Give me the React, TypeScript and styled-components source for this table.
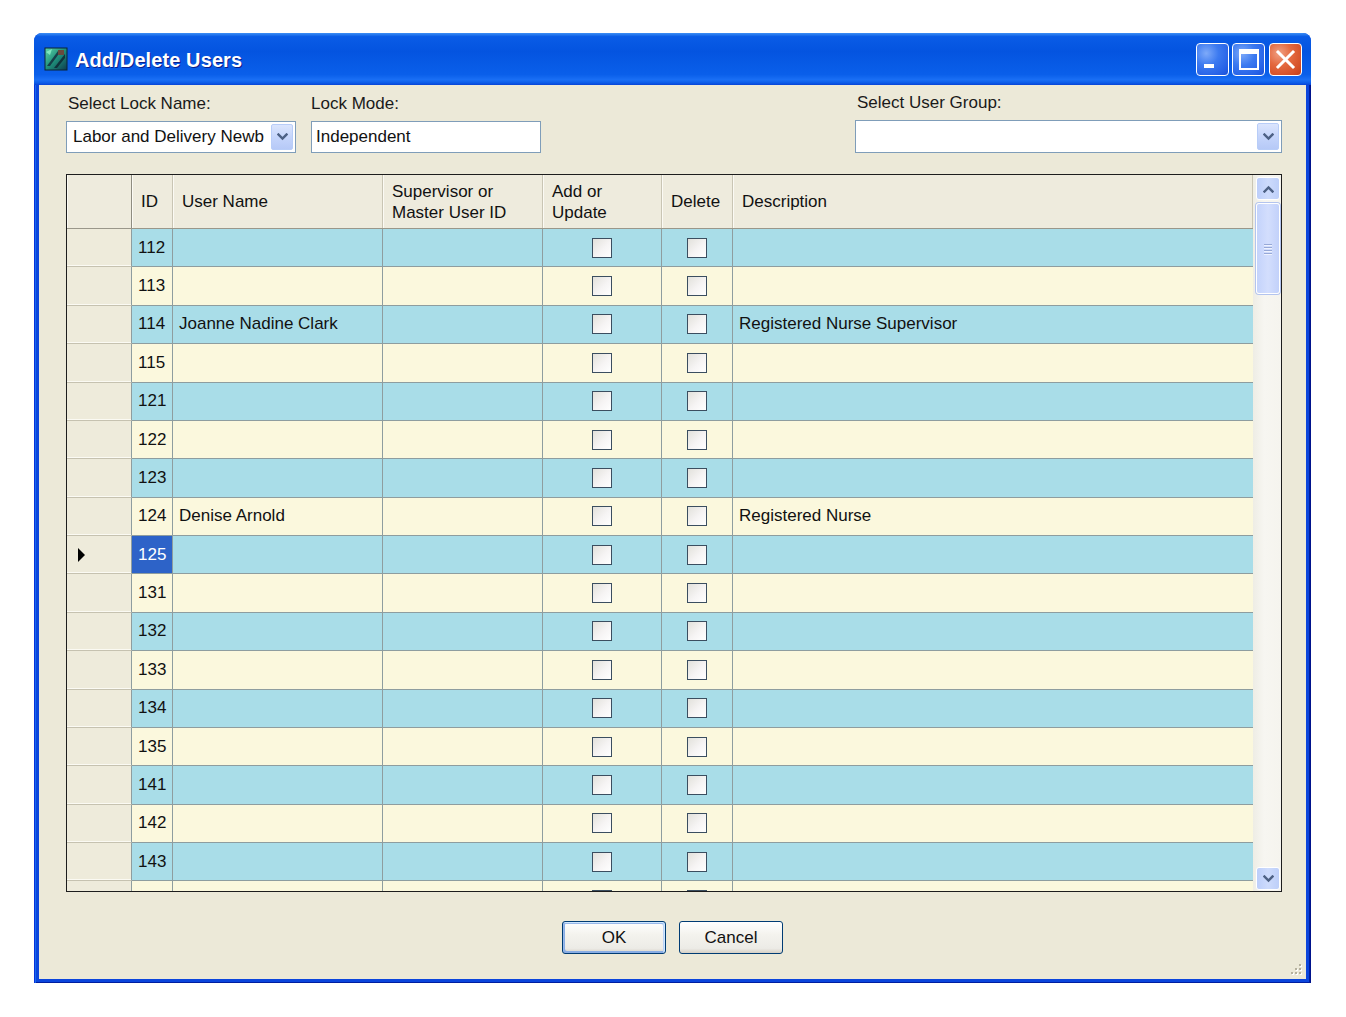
import React from 'react';
import styled, { createGlobalStyle, css } from 'styled-components';

const GlobalStyle = createGlobalStyle`
  html, body { margin: 0; padding: 0; background: #ffffff; }
  body { font-family: "Liberation Sans", Arial, sans-serif; color: #000; }
  * { box-sizing: border-box; }
`;

const COLS = '65px 41px 210px 160px 119px 71px 1fr';
const LINE = '#8e9d9f';

const Page = styled.div`
  padding: 33px 0 0 34px;
`;

const Window = styled.div`
  width: 1277px;
  height: 950px;
  display: flex;
  flex-direction: column;
  border-radius: 8px 8px 0 0;
  overflow: hidden;
  background: #0b45dc;
`;

const TitleBar = styled.div`
  height: 52px;
  flex: none;
  display: flex;
  align-items: center;
  padding: 0 9px 0 10px;
  background: linear-gradient(180deg, #3d8ff5 0%, #0a5ce6 7%, #0454e0 35%, #0a5fea 80%, #1a6ff5 90%, #0c5ce8 96%, #0844d6 100%);
`;

const TitleIcon = styled.svg`
  width: 24px;
  height: 24px;
  flex: none;
  margin-right: 7px;
`;

const TitleText = styled.div`
  flex: 1;
  font-family: "Liberation Sans", Arial, sans-serif;
  font-weight: bold;
  font-size: 20px;
  color: #ffffff;
  text-shadow: 1px 1px 0 #0a1e8a;
  letter-spacing: 0.1px;
  padding-top: 2px;
`;

const CaptionButtons = styled.div`
  display: flex;
  gap: 3px;
  align-items: center;
  margin-top: 1px;
`;

const CaptionButton = styled.div<{ $close?: boolean }>`
  width: 33px;
  height: 33px;
  border: 1px solid #ffffff;
  border-radius: 4px;
  display: flex;
  align-items: center;
  justify-content: center;
  ${(p) =>
    p.$close
      ? css`
          margin-left: 1px;
          background: radial-gradient(circle at 30% 30%, #f0a184 0%, #e4693f 40%, #d34d25 80%, #c23f1a 100%);
        `
      : css`
          background: radial-gradient(circle at 30% 30%, #7eaaf9 0%, #3c7af0 40%, #2560e6 80%, #1a50d6 100%);
        `}
`;

const WindowBody = styled.div`
  flex: 1;
  display: flex;
  padding: 0 5px 5px 5px;
  background: #0b45dc;
  box-shadow: inset 1px 0 #0831d9, inset 2px 0 #166aee, inset -1px -1px #00138c, inset -2px -2px #001ea0;
`;

const Client = styled.div`
  position: relative;
  flex: 1;
  display: flex;
  flex-direction: column;
  background: #ece9d8;
  padding: 8px 24px 25px 27px;
`;

const FieldsRow = styled.div`
  display: flex;
  align-items: flex-end;
`;

const FieldGroup = styled.div<{ $w: number; $gap?: number }>`
  width: ${(p) => p.$w}px;
  margin-right: ${(p) => p.$gap ?? 0}px;
  display: flex;
  flex-direction: column;
`;

const Spacer = styled.div`
  flex: 1;
`;

const Label = styled.div<{ $pad?: number }>`
  font-size: 17px;
  line-height: 20px;
  height: 20px;
  padding-left: ${(p) => p.$pad ?? 2}px;
  margin-bottom: 7px;
  white-space: nowrap;
  color: #1a1a1a;
`;

const Combo = styled.div<{ $h?: number }>`
  height: ${(p) => p.$h ?? 32}px;
  border: 1px solid #7f9db9;
  background: #ffffff;
  display: flex;
  align-items: center;
  padding: 2px;
`;

const ComboText = styled.div`
  flex: 1;
  padding-left: 4px;
  font-size: 17px;
  white-space: nowrap;
  overflow: hidden;
  color: #111;
`;

const DropButton = styled.div`
  width: 22px;
  align-self: stretch;
  border-radius: 2px;
  border: 1px solid #b8cdf8;
  background: linear-gradient(180deg, #dbe5fd 0%, #c5d5fb 50%, #b6c9f7 100%);
  display: flex;
  align-items: center;
  justify-content: center;
`;

const TextBox = styled.div`
  height: 32px;
  border: 1px solid #7f9db9;
  background: #ffffff;
  display: flex;
  align-items: center;
  padding-left: 4px;
  font-size: 17px;
  color: #111;
`;

const GridFrame = styled.div`
  margin-top: 21px;
  height: 718px;
  border: 1px solid #1d1d1d;
  display: flex;
  background: #ece9d8;
`;

const GridTable = styled.div`
  flex: 1;
  display: flex;
  flex-direction: column;
  overflow: hidden;
`;

const HeaderRow = styled.div`
  flex: none;
  display: grid;
  grid-template-columns: ${COLS};
  height: 54px;
  background: #eeebdd;
  border-bottom: 1px solid #9a978a;
`;

const HeaderCell = styled.div<{ $first?: boolean }>`
  display: flex;
  align-items: center;
  padding-left: 9px;
  font-size: 17px;
  line-height: 21px;
  color: #111;
  border-right: 1px solid ${(p) => (p.$first ? '#8e8c80' : '#c9c5b4')};
  box-shadow: inset 1px 0 #fbfaf4;
  white-space: nowrap;
`;

const DataRow = styled.div<{ $blue: boolean }>`
  flex: none;
  display: grid;
  grid-template-columns: ${COLS};
  height: 38.375px;
  background: ${(p) => (p.$blue ? '#a9dde8' : '#fbf8dd')};
`;

const RowHead = styled.div`
  background: #eeebdb;
  border-right: 1px solid ${LINE};
  border-bottom: 1px solid #c6c2b0;
  box-shadow: inset 0 -1px #fbfaf3;
  display: flex;
  align-items: center;
  padding-left: 11px;
`;

const Arrow = styled.div`
  width: 0;
  height: 0;
  border-left: 7px solid #000;
  border-top: 7px solid transparent;
  border-bottom: 7px solid transparent;
`;

const Cell = styled.div<{ $center?: boolean; $selected?: boolean; $last?: boolean }>`
  display: flex;
  align-items: center;
  justify-content: ${(p) => (p.$center ? 'center' : 'flex-start')};
  padding-left: ${(p) => (p.$center ? 0 : 6)}px;
  border-right: ${(p) => (p.$last ? 'none' : `1px solid ${LINE}`)};
  border-bottom: 1px solid ${LINE};
  font-size: 17px;
  white-space: nowrap;
  overflow: hidden;
  color: #111;
  ${(p) =>
    p.$selected &&
    css`
      background: #2d63c8;
      color: #ffffff;
    `}
`;

const CheckBox = styled.div`
  width: 20px;
  height: 20px;
  border: 1px solid #3b4e60;
  background: linear-gradient(135deg, #e2e1db 0%, #f6f4f4 55%, #ffffff 100%);
`;

const ScrollBar = styled.div`
  width: 28px;
  flex: none;
  display: flex;
  flex-direction: column;
  padding: 2px 1px 1px 3px;
  background: linear-gradient(90deg, #eeede5 0%, #f7f6f1 40%, #f5f4ee 100%);
`;

const ScrollButton = styled.div`
  height: 23px;
  flex: none;
  border: 1px solid #ffffff;
  border-radius: 3px;
  background: linear-gradient(90deg, #bccefa 0%, #cddbfc 50%, #bdcff9 100%);
  display: flex;
  align-items: center;
  justify-content: center;
`;

const Thumb = styled.div`
  height: 91px;
  flex: none;
  margin-top: 3px;
  border: 1px solid #ffffff;
  border-radius: 3px;
  background: linear-gradient(90deg, #c4d3fb 0%, #d3defd 50%, #c2d1fa 100%);
  box-shadow: 0 0 0 1px #b3c4ee;
  display: flex;
  flex-direction: column;
  align-items: center;
  justify-content: center;
  gap: 2px;
`;

const GripLine = styled.div`
  width: 8px;
  height: 1px;
  background: #97a9d8;
  box-shadow: 0 1px #eef2fe;
`;

const Track = styled.div`
  flex: 1;
`;

const ButtonRow = styled.div`
  margin-top: 29px;
  padding-right: 3px;
  display: flex;
  justify-content: center;
  gap: 13px;
`;

const DialogButton = styled.button<{ $default?: boolean }>`
  width: 104px;
  height: 33px;
  border: 1px solid #003c74;
  border-radius: 3px;
  background: linear-gradient(180deg, #ffffff 0%, #f4f3ee 40%, #ecebe6 85%, #d6d0c5 100%);
  font-family: "Liberation Sans", Arial, sans-serif;
  font-size: 17px;
  color: #111;
  padding: 0;
  ${(p) =>
    p.$default &&
    css`
      box-shadow: inset -1px 1px #cee7ff, inset 1px 2px #98b8ea, inset -2px 2px #bcd4f6, inset 1px -1px #89ade4,
        inset 2px -2px #89ade4;
    `}
`;

const Grip = styled.svg`
  position: absolute;
  right: 3px;
  bottom: 3px;
  width: 14px;
  height: 14px;
`;

const Chevron = ({ up }: { up?: boolean }) => (
  <svg width="11" height="8" viewBox="0 0 11 8">
    <path
      d={up ? 'M1.5 6.5 L5.5 2.5 L9.5 6.5' : 'M1.5 1.5 L5.5 5.5 L9.5 1.5'}
      fill="none"
      stroke="#4d6185"
      strokeWidth="2.4"
      strokeLinecap="square"
    />
  </svg>
);

type Row = { key: string; id: string; name?: string; desc?: string };

const rows: Row[] = [
  { key: 'r112', id: '112' },
  { key: 'r113', id: '113' },
  { key: 'r114', id: '114', name: 'Joanne Nadine Clark', desc: 'Registered Nurse Supervisor' },
  { key: 'r115', id: '115' },
  { key: 'r121', id: '121' },
  { key: 'r122', id: '122' },
  { key: 'r123', id: '123' },
  { key: 'r124', id: '124', name: 'Denise Arnold', desc: 'Registered Nurse' },
  { key: 'r125', id: '125' },
  { key: 'r131', id: '131' },
  { key: 'r132', id: '132' },
  { key: 'r133', id: '133' },
  { key: 'r134', id: '134' },
  { key: 'r135', id: '135' },
  { key: 'r141', id: '141' },
  { key: 'r142', id: '142' },
  { key: 'r143', id: '143' },
  { key: 'r144', id: '' },
];

const SELECTED = '125';

export default function App() {
  return (
    <>
      <GlobalStyle />
      <Page>
        <Window>
          <TitleBar>
            <TitleIcon viewBox="0 0 24 24">
              <defs>
                <linearGradient id="ti" x1="0" y1="0" x2="1" y2="1">
                  <stop offset="0" stopColor="#5fd6a8" />
                  <stop offset="0.5" stopColor="#1f8f7a" />
                  <stop offset="1" stopColor="#0e3b4e" />
                </linearGradient>
              </defs>
              <rect x="1" y="1" width="22" height="22" fill="url(#ti)" stroke="#0b2436" strokeWidth="1" />
              <path d="M3 19 L14 4 L17 4 L6 19 Z" fill="#13303f" opacity="0.85" />
              <path d="M10 21 L21 7 L21 11 L13 21 Z" fill="#0d2330" opacity="0.8" />
              <rect x="14" y="3" width="6" height="5" fill="#6a4a3c" />
              <path d="M2 5 L8 2 L6 8 Z" fill="#8ef0c8" opacity="0.8" />
            </TitleIcon>
            <TitleText>Add/Delete Users</TitleText>
            <CaptionButtons>
              <CaptionButton>
                <svg width="31" height="31" viewBox="0 0 31 31">
                  <rect x="7" y="20" width="10" height="4" fill="#ffffff" />
                </svg>
              </CaptionButton>
              <CaptionButton>
                <svg width="31" height="31" viewBox="0 0 31 31">
                  <rect x="7" y="6" width="18" height="19" fill="none" stroke="#ffffff" strokeWidth="2" />
                  <rect x="7" y="6" width="18" height="4" fill="#ffffff" />
                </svg>
              </CaptionButton>
              <CaptionButton $close>
                <svg width="31" height="31" viewBox="0 0 31 31">
                  <path d="M8 8 L23 23 M23 8 L8 23" stroke="#ffffff" strokeWidth="3" strokeLinecap="square" />
                </svg>
              </CaptionButton>
            </CaptionButtons>
          </TitleBar>
          <WindowBody>
            <Client>
              <FieldsRow>
                <FieldGroup $w={230} $gap={15}>
                  <Label>Select Lock Name:</Label>
                  <Combo>
                    <ComboText>Labor and Delivery Newb</ComboText>
                    <DropButton>
                      <Chevron />
                    </DropButton>
                  </Combo>
                </FieldGroup>
                <FieldGroup $w={230}>
                  <Label $pad={0}>Lock Mode:</Label>
                  <TextBox>Independent</TextBox>
                </FieldGroup>
                <Spacer />
                <FieldGroup $w={427}>
                  <Label>Select User Group:</Label>
                  <Combo $h={33}>
                    <ComboText />
                    <DropButton>
                      <Chevron />
                    </DropButton>
                  </Combo>
                </FieldGroup>
              </FieldsRow>

              <GridFrame>
                <GridTable>
                  <HeaderRow>
                    <HeaderCell $first />
                    <HeaderCell>ID</HeaderCell>
                    <HeaderCell>User Name</HeaderCell>
                    <HeaderCell>
                      Supervisor or
                      <br />
                      Master User ID
                    </HeaderCell>
                    <HeaderCell>
                      Add or
                      <br />
                      Update
                    </HeaderCell>
                    <HeaderCell>Delete</HeaderCell>
                    <HeaderCell>Description</HeaderCell>
                  </HeaderRow>
                  {rows.map((r, i) => (
                    <DataRow key={r.key} $blue={i % 2 === 0}>
                      <RowHead>{r.id === SELECTED && <Arrow />}</RowHead>
                      <Cell $selected={r.id === SELECTED}>{r.id}</Cell>
                      <Cell>{r.name}</Cell>
                      <Cell />
                      <Cell $center>
                        <CheckBox />
                      </Cell>
                      <Cell $center>
                        <CheckBox />
                      </Cell>
                      <Cell $last>{r.desc}</Cell>
                    </DataRow>
                  ))}
                </GridTable>
                <ScrollBar>
                  <ScrollButton>
                    <Chevron up />
                  </ScrollButton>
                  <Thumb>
                    <GripLine />
                    <GripLine />
                    <GripLine />
                    <GripLine />
                  </Thumb>
                  <Track />
                  <ScrollButton>
                    <Chevron />
                  </ScrollButton>
                </ScrollBar>
              </GridFrame>

              <ButtonRow>
                <DialogButton $default>OK</DialogButton>
                <DialogButton>Cancel</DialogButton>
              </ButtonRow>

              <Grip viewBox="0 0 14 14">
                {[
                  [11, 3],
                  [7, 7],
                  [11, 7],
                  [3, 11],
                  [7, 11],
                  [11, 11],
                ].map(([x, y]) => (
                  <g key={`${x}-${y}`}>
                    <rect x={x} y={y} width="2" height="2" fill="#ffffff" />
                    <rect x={x - 1} y={y - 1} width="2" height="2" fill="#b5b19e" />
                  </g>
                ))}
              </Grip>
            </Client>
          </WindowBody>
        </Window>
      </Page>
    </>
  );
}
